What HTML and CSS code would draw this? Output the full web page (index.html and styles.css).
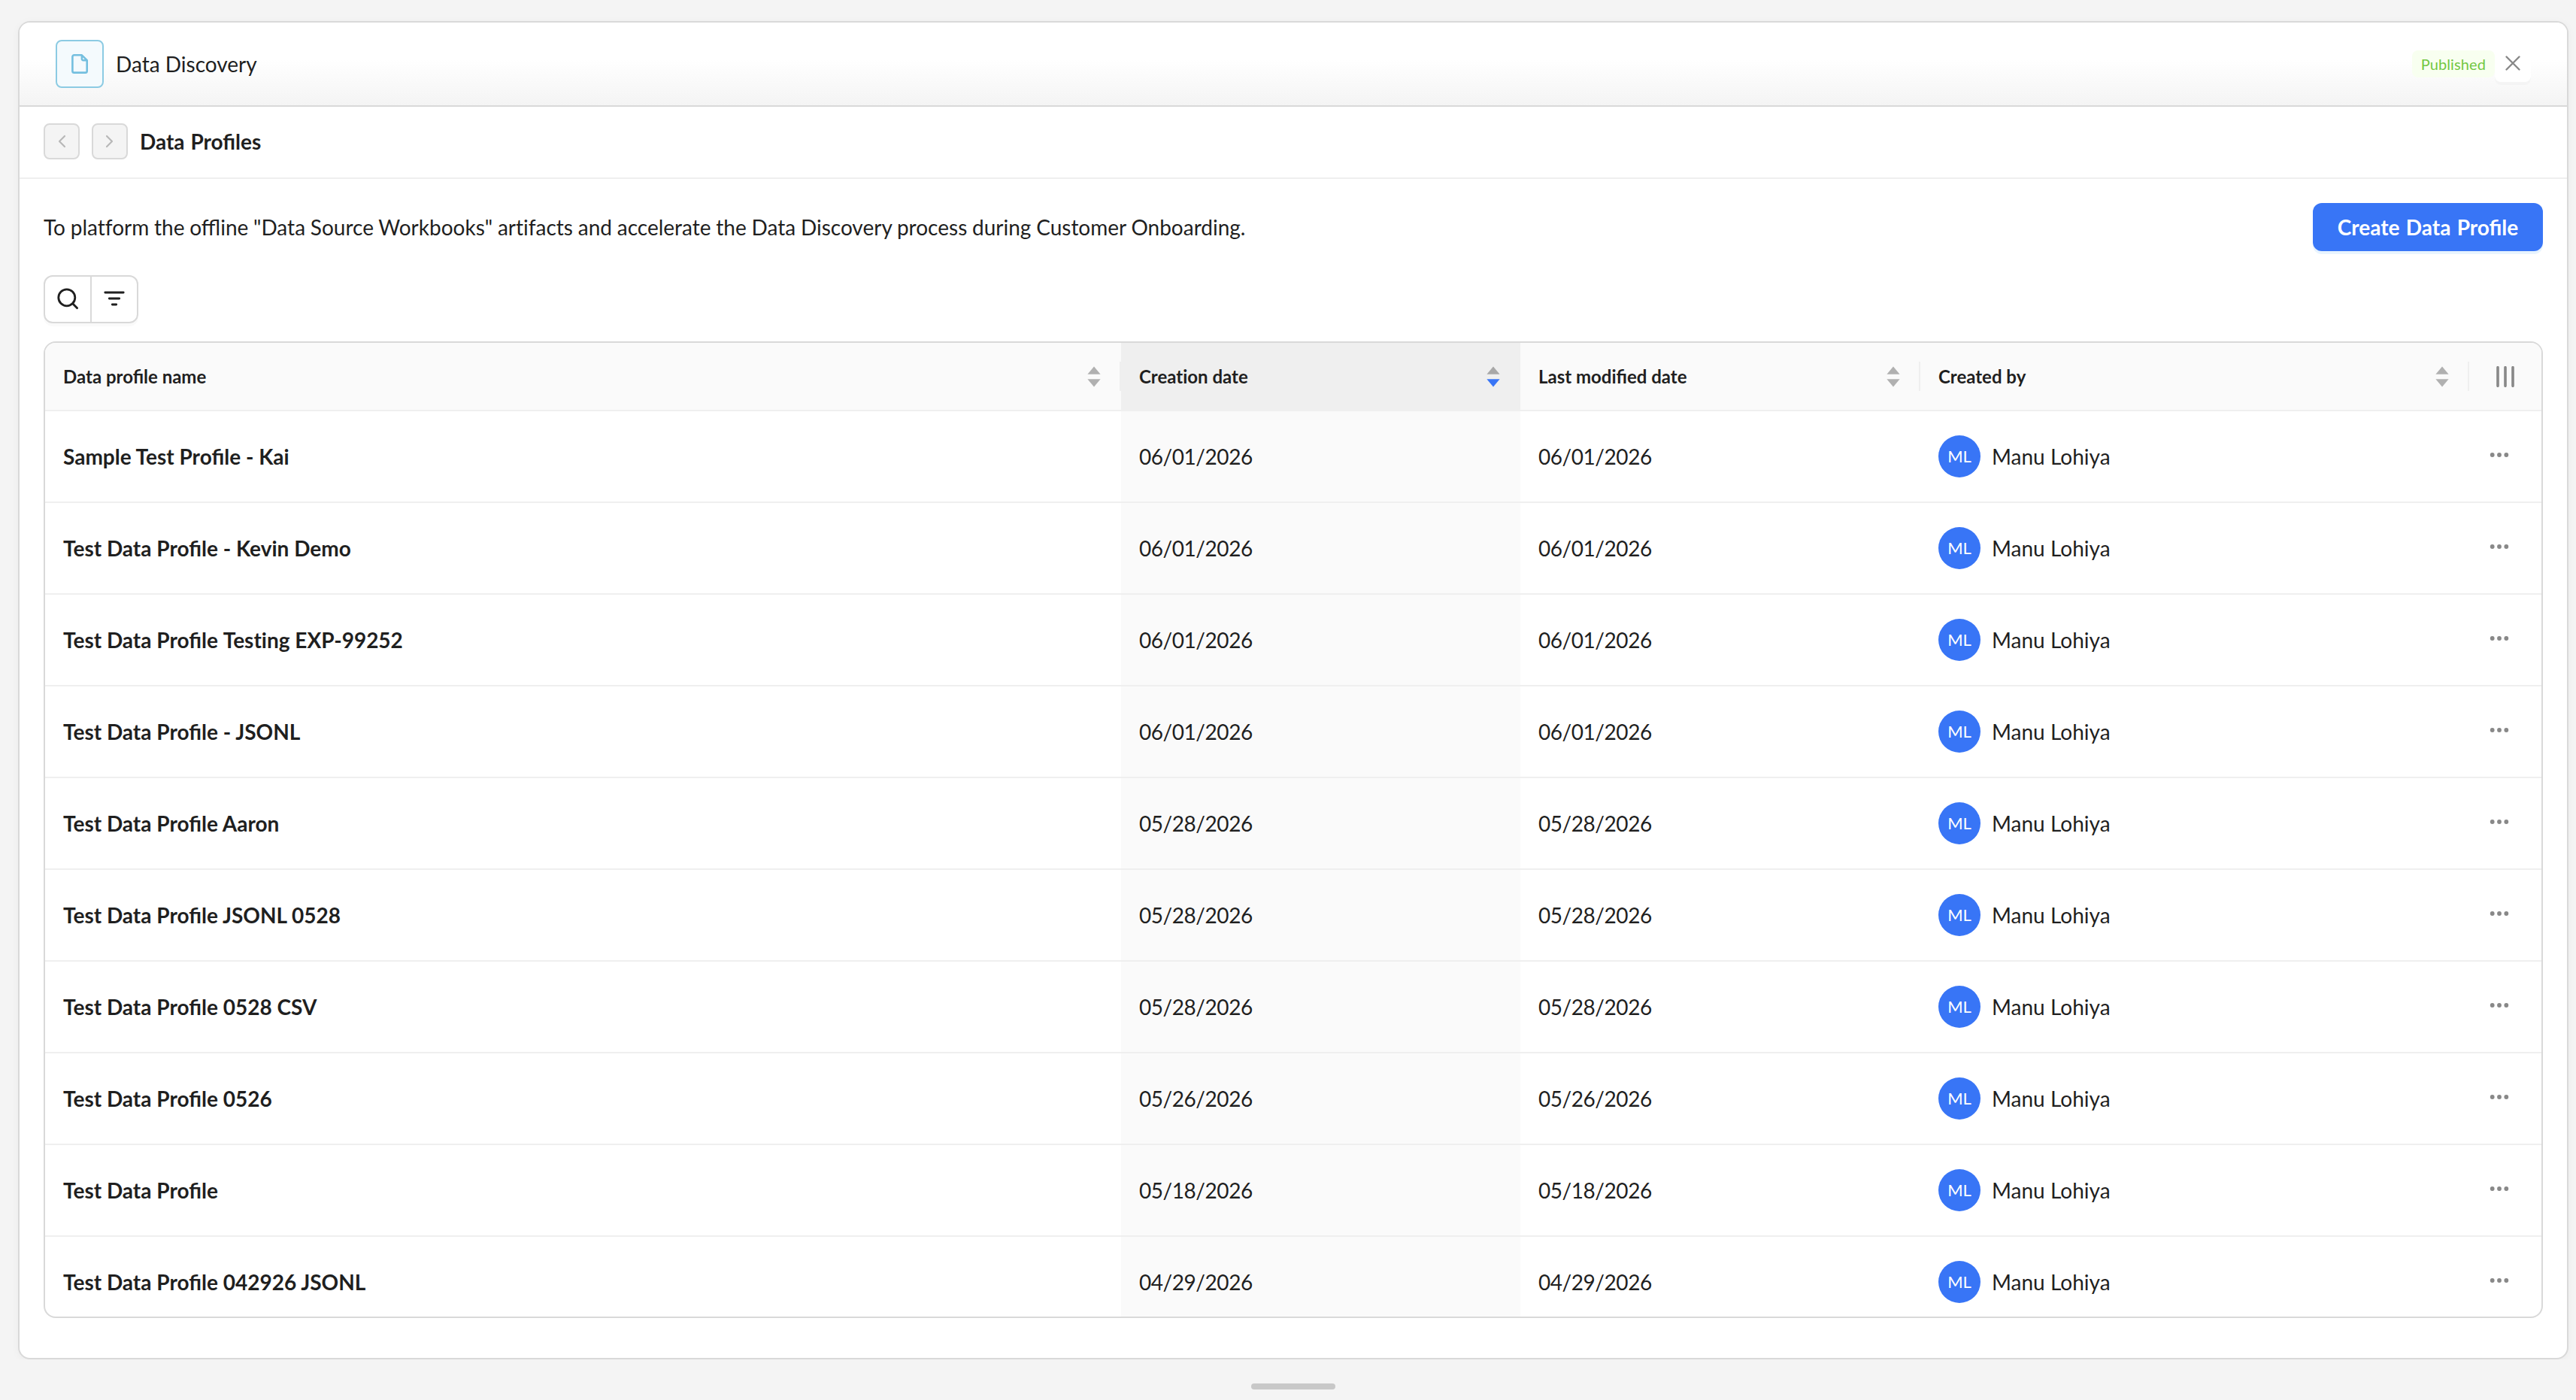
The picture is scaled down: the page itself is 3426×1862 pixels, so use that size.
FILE: index.html
```html
<!DOCTYPE html>
<html lang="en">
<head>
    <meta charset="UTF-8">
    <title>Data Discovery</title>
    <link rel="stylesheet" href="styles.css">
</head>
<body>

<svg class="sprite">
    <symbol id="sort" viewBox="0 0 18 28">
        <path class="up" d="M9 .6 17.6 10.7H.4z"/>
        <path class="down" d="M9 27.4 17.6 17.3H.4z"/>
    </symbol>
    <symbol id="dots" viewBox="0 0 26 8">
        <circle cx="3.7" cy="4" r="2.9"/>
        <circle cx="13" cy="4" r="2.9"/>
        <circle cx="22.3" cy="4" r="2.9"/>
    </symbol>
</svg>

<div class="stage">
    <div class="panel">
        <div class="panel-header">
            <div class="app-icon">
                <svg width="24" height="28" viewBox="0 0 24 28" fill="none" stroke="currentColor" stroke-width="2.6" stroke-linejoin="round">
                    <path d="M4.6 2.3h10.2l6.9 6.9v14.2a2.2 2.2 0 0 1-2.2 2.2H4.6a2.2 2.2 0 0 1-2.2-2.2V4.5a2.2 2.2 0 0 1 2.2-2.2z"/>
                    <path d="M14.8 2.8v4.2a2.2 2.2 0 0 0 2.2 2.2h4.5" stroke-width="2.4"/>
                </svg>
            </div>
            <span class="app-title">Data Discovery</span>
            <span class="tag">Published</span>
            <button class="close-btn">
                <svg width="22" height="22" viewBox="0 0 22 22" fill="none" stroke="#888" stroke-width="2.4" stroke-linecap="round">
                    <path d="M2.5 2.5l17 17M19.5 2.5l-17 17"/>
                </svg>
            </button>
        </div>

        <div class="sub-header">
            <button class="nav-btn">
                <svg width="14" height="20" viewBox="0 0 14 20"><path d="M11 3 4 10l7 7"/></svg>
            </button>
            <button class="nav-btn">
                <svg width="14" height="20" viewBox="0 0 14 20"><path d="M3 3l7 7-7 7"/></svg>
            </button>
            <span class="page-title">Data Profiles</span>
        </div>

        <div class="content">
            <div class="intro">
                <span class="intro-text">To <span class="no-liga">platform</span> the offline "Data Source Workbooks" <span class="no-liga">artifacts</span> and accelerate the Data Discovery process during Customer Onboarding.</span>
                <button class="create-btn">Create Data Profile</button>
            </div>

            <div class="toolbar">
                <button class="tool-btn">
                    <svg width="30" height="30" viewBox="0 0 30 30"><circle cx="13.8" cy="12.8" r="11"/><path d="M21.7 20.7l5.9 6.1"/></svg>
                </button>
                <button class="tool-btn">
                    <svg width="30" height="30" viewBox="0 0 30 30"><path d="M2.8 6h24.4M8.3 14h13.4M12.3 22h5.4"/></svg>
                </button>
            </div>

            <div class="table-wrap">
                <table class="profiles">
                    <colgroup>
                        <col class="col-name">
                        <col class="col-created">
                        <col class="col-modified">
                        <col class="col-owner">
                        <col class="col-menu">
                    </colgroup>
                    <thead>
                    <tr>
                        <th><div class="head">Data profile name<svg class="sort"><use href="#sort"/></svg></div></th>
                        <th class="sorted"><div class="head no-liga">Creation date<svg class="sort sort-desc"><use href="#sort"/></svg></div></th>
                        <th><div class="head">Last modified date<svg class="sort"><use href="#sort"/></svg></div></th>
                        <th><div class="head">Created by<svg class="sort"><use href="#sort"/></svg></div></th>
                        <th class="menu-head"><svg class="columns" viewBox="0 0 24 28"><path d="M2 1.7v24.6M12 1.7v24.6M22 1.7v24.6"/></svg></th>
                    </tr>
                    </thead>
                    <tbody>
                    <tr>
                        <td class="name">Sample Test Profile - Kai</td>
                        <td class="date sorted">06/01/2026</td>
                        <td class="date">06/01/2026</td>
                        <td><div class="owner"><span class="avatar">ML</span>Manu Lohiya</div></td>
                        <td class="menu"><svg class="dots"><use href="#dots"/></svg></td>
                    </tr>
                    <tr>
                        <td class="name">Test Data Profile - Kevin Demo</td>
                        <td class="date sorted">06/01/2026</td>
                        <td class="date">06/01/2026</td>
                        <td><div class="owner"><span class="avatar">ML</span>Manu Lohiya</div></td>
                        <td class="menu"><svg class="dots"><use href="#dots"/></svg></td>
                    </tr>
                    <tr>
                        <td class="name">Test Data Profile <span class="no-liga">Testing</span> EXP-99252</td>
                        <td class="date sorted">06/01/2026</td>
                        <td class="date">06/01/2026</td>
                        <td><div class="owner"><span class="avatar">ML</span>Manu Lohiya</div></td>
                        <td class="menu"><svg class="dots"><use href="#dots"/></svg></td>
                    </tr>
                    <tr>
                        <td class="name">Test Data Profile - JSONL</td>
                        <td class="date sorted">06/01/2026</td>
                        <td class="date">06/01/2026</td>
                        <td><div class="owner"><span class="avatar">ML</span>Manu Lohiya</div></td>
                        <td class="menu"><svg class="dots"><use href="#dots"/></svg></td>
                    </tr>
                    <tr>
                        <td class="name">Test Data Profile Aaron</td>
                        <td class="date sorted">05/28/2026</td>
                        <td class="date">05/28/2026</td>
                        <td><div class="owner"><span class="avatar">ML</span>Manu Lohiya</div></td>
                        <td class="menu"><svg class="dots"><use href="#dots"/></svg></td>
                    </tr>
                    <tr>
                        <td class="name">Test Data Profile JSONL 0528</td>
                        <td class="date sorted">05/28/2026</td>
                        <td class="date">05/28/2026</td>
                        <td><div class="owner"><span class="avatar">ML</span>Manu Lohiya</div></td>
                        <td class="menu"><svg class="dots"><use href="#dots"/></svg></td>
                    </tr>
                    <tr>
                        <td class="name">Test Data Profile 0528 CSV</td>
                        <td class="date sorted">05/28/2026</td>
                        <td class="date">05/28/2026</td>
                        <td><div class="owner"><span class="avatar">ML</span>Manu Lohiya</div></td>
                        <td class="menu"><svg class="dots"><use href="#dots"/></svg></td>
                    </tr>
                    <tr>
                        <td class="name">Test Data Profile 0526</td>
                        <td class="date sorted">05/26/2026</td>
                        <td class="date">05/26/2026</td>
                        <td><div class="owner"><span class="avatar">ML</span>Manu Lohiya</div></td>
                        <td class="menu"><svg class="dots"><use href="#dots"/></svg></td>
                    </tr>
                    <tr>
                        <td class="name">Test Data Profile</td>
                        <td class="date sorted">05/18/2026</td>
                        <td class="date">05/18/2026</td>
                        <td><div class="owner"><span class="avatar">ML</span>Manu Lohiya</div></td>
                        <td class="menu"><svg class="dots"><use href="#dots"/></svg></td>
                    </tr>
                    <tr>
                        <td class="name">Test Data Profile 042926 JSONL</td>
                        <td class="date sorted">04/29/2026</td>
                        <td class="date">04/29/2026</td>
                        <td><div class="owner"><span class="avatar">ML</span>Manu Lohiya</div></td>
                        <td class="menu"><svg class="dots"><use href="#dots"/></svg></td>
                    </tr>
                    </tbody>
                </table>
            </div>
        </div>
    </div>
</div>

<div class="handle"></div>

</body>
</html>
```

FILE: styles.css
```css
* {
    box-sizing: border-box;
}
body {
    margin: 0;
    height: 1862px;
    overflow: hidden;
    background: #f4f4f4;
    color: #1f1f1f;
    font-family: Lato, sans-serif;
    font-size: 28px;
    line-height: 44px;
}
button {
    padding: 0;
    border: none;
    font: inherit;
    cursor: pointer;
}
svg {
    display: block;
    flex: none;
}
.sprite {
    display: none;
}
.no-liga {
    font-variant-ligatures: none;
}

/* the bottom edge of the stage cuts off the panel shadow */
.stage {
    height: 1808px;
    padding: 28px 10px 0 24px;
    overflow: hidden;
}
.panel {
    height: 1780px;
    background: #fff;
    border: 2px solid #d9d9d9;
    border-radius: 16px;
    box-shadow: 0 2px 12px rgba(0, 0, 0, 0.04);
    overflow: hidden;
}
.panel-header {
    display: flex;
    align-items: center;
    height: 112px;
    padding: 0 48px;
    border-bottom: 2px solid #d9d9d9;
    background: linear-gradient(#fff 45%, #f4f4f4);
}
.app-icon {
    display: flex;
    align-items: center;
    justify-content: center;
    width: 64px;
    height: 64px;
    border: 2px solid #8ccbe3;
    border-radius: 8px;
    background: #f4fafd;
    color: #74bfdf;
}
.app-title {
    margin-left: 16px;
    margin-right: auto;
}
.tag {
    height: 36px;
    padding: 0 12px;
    border-radius: 8px;
    background: #f8fff0;
    color: #73c743;
    font-size: 20px;
    line-height: 36px;
    letter-spacing: 0.1px;
}
.close-btn {
    display: flex;
    justify-content: center;
    width: 48px;
    height: 48px;
    padding-top: 12px;
    border-radius: 8px;
    background: #fff;
    box-shadow: 0 4px 0 rgba(0, 0, 0, 0.02);
}

.sub-header {
    display: flex;
    align-items: center;
    gap: 16px;
    height: 96px;
    padding: 0 32px 2px;
    border-bottom: 2px solid #efefef;
}
.nav-btn {
    display: flex;
    align-items: center;
    justify-content: center;
    width: 48px;
    height: 48px;
    border: 2px solid #d9d9d9;
    border-radius: 8px;
    background: #f4f4f4;
}
.nav-btn svg {
    fill: none;
    stroke: #b8b8b8;
    stroke-width: 2.2;
    stroke-linecap: round;
    stroke-linejoin: round;
}
.page-title {
    font-weight: bold;
    word-spacing: 1px;
}

.content {
    padding: 32px;
}
.intro {
    display: flex;
    align-items: center;
    justify-content: space-between;
}
.intro-text {
    word-spacing: -0.4px;
}
.create-btn {
    width: 306px;
    height: 64px;
    border-radius: 12px;
    background: #3875f6;
    box-shadow: 0 4px 0 #e8f4fe;
    color: #fff;
    font-weight: bold;
    word-spacing: 1.5px;
}
.toolbar {
    display: flex;
    width: 126px;
    margin: 32px 0 24px;
    border: 2px solid #d9d9d9;
    border-radius: 12px;
    box-shadow: 0 4px 0 rgba(0, 0, 0, 0.02);
}
.tool-btn {
    display: flex;
    align-items: center;
    justify-content: center;
    flex: 1;
    height: 60px;
    background: none;
}
.tool-btn + .tool-btn {
    border-left: 2px solid #d9d9d9;
}
.tool-btn svg {
    fill: none;
    stroke: #1f1f1f;
    stroke-width: 2.8;
    stroke-linecap: round;
}

.table-wrap {
    height: 1299px;
    border: 2px solid #d9d9d9;
    border-radius: 16px;
    overflow: hidden;
}
.profiles {
    width: 3320px;
    table-layout: fixed;
    border-collapse: separate;
    border-spacing: 0;
}
.col-name {
    width: 1431px;
}
.col-created {
    width: 531px;
}
.col-modified {
    width: 532px;
}
.col-owner {
    width: 730px;
}
.col-menu {
    width: 96px;
}
th, td {
    padding: 0 24px;
    border-bottom: 2px solid #efefef;
    text-align: left;
}
th {
    height: 91px;
    padding: 0;
    background: #fafafa;
    font-size: 24px;
    line-height: 39px;
}
td {
    height: 122px;
}
th.sorted {
    background: #efefef;
}
td.sorted {
    background: #fafafa;
}
.head {
    display: flex;
    align-items: center;
    justify-content: space-between;
    padding: 0 25px 0 24px;
    border-right: 2px solid #efefef;
}
.sort {
    width: 18px;
    height: 28px;
    fill: #b0b0b0;
}
.sort-desc {
    --down: #3875f6;
    fill: #a8a8a8;
}
.down {
    fill: var(--down, inherit);
}
.menu-head {
    padding-left: 36px;
}
.columns {
    width: 24px;
    height: 28px;
    fill: none;
    stroke: #888;
    stroke-width: 3.6;
    stroke-linecap: round;
}
.name {
    font-weight: bold;
}
.date {
    letter-spacing: -0.45px;
}
.owner {
    display: flex;
    align-items: center;
    gap: 15px;
}
.avatar {
    width: 56px;
    height: 56px;
    border-radius: 50%;
    background: #3875f6;
    color: #fff;
    font-size: 22px;
    line-height: 56px;
    text-align: center;
}
.menu {
    padding: 0 0 4px 27px;
}
.dots {
    width: 26px;
    height: 8px;
    fill: #888;
}

.handle {
    width: 112px;
    height: 8px;
    margin: 32px 0 0 1664px;
    border-radius: 4px;
    background: #c8c8c8;
}
```
